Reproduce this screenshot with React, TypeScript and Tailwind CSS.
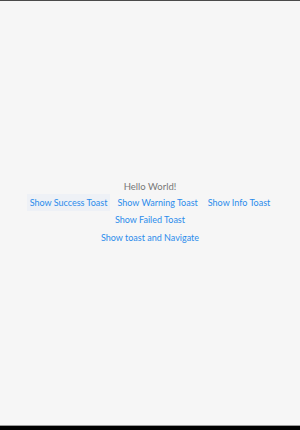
import React from "react";

const rows = [
  ["Show Success Toast", "Show Warning Toast", "Show Info Toast"],
  ["Show Failed Toast"],
  ["Show toast and Navigate"],
];

export default function App() {
  return (
    <div className="w-[300px] h-[430px] flex flex-col bg-black font-['Lato',sans-serif]">
      <div className="h-px bg-[#4a4a4a]" />
      <div className="flex-1 bg-[#f6f6f6] flex flex-col items-center justify-center">
        <div className="text-[9.5px] leading-[14px] text-[#777777]">Hello World!</div>
        {rows.map((row, r) => (
          <div key={r} className="flex justify-center gap-x-[4px]">
            {row.map((b) => (
              <button
                key={b}
                className={
                  "px-[3px] h-[17.5px] text-[9px] leading-[17.5px] text-[#2b8cec] " +
                  (b === "Show Success Toast" ? "bg-[#eef1f6]" : "")
                }
              >
                {b}
              </button>
            ))}
          </div>
        ))}
      </div>
      <div className="h-px bg-[#9a9a9a]" />
      <div className="h-[4px] bg-black" />
    </div>
  );
}
